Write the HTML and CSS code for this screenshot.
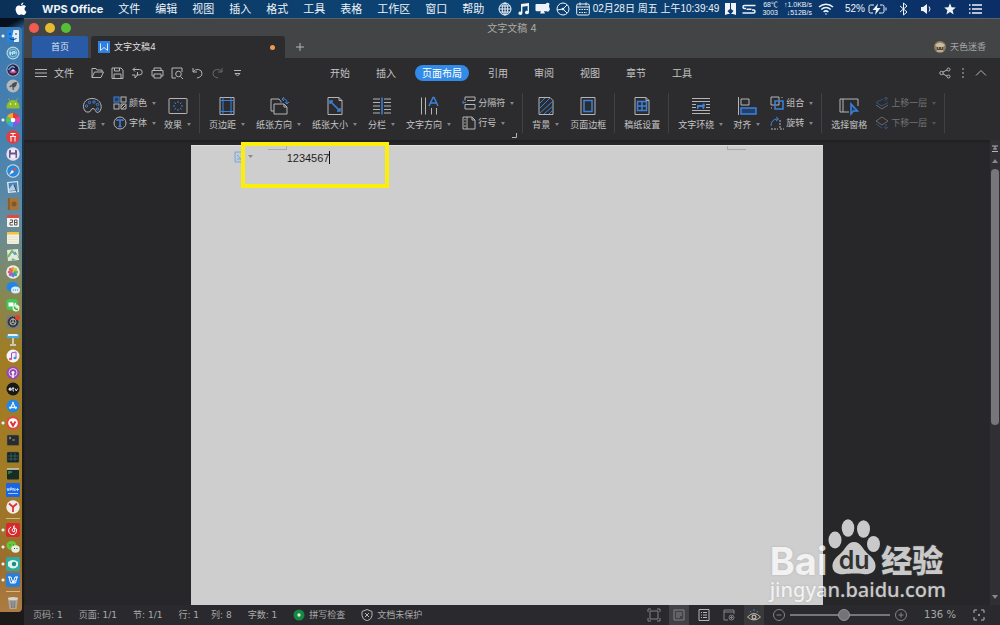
FILE: index.html
```html
<!DOCTYPE html>
<html lang="zh-CN">
<head>
<meta charset="utf-8">
<title>文字文稿4</title>
<link rel="stylesheet" href="styles.css">
</head>
<body>
<header class="menubar">
  <nav class="menus">
    <svg class="apple" viewBox="0 0 12 14" width="12" height="14"><path d="M8.3.5c.1 1.500-1 2.700-2.300 2.800C5.900 1.900 7 .7 8.300.5zM6.200 4c.6 0 1.300-.7 2.400-.7 1 0 1.900.5 2.400 1.300-2.100 1.200-1.800 4.200.5 5.100-.5 1.400-1.600 3.300-2.800 3.300-.9 0-1.200-.5-2.300-.5s-1.500.5-2.300.5C2.700 13 .6 10.200.6 7.300c0-2.500 1.600-3.900 3.200-3.900 1 0 1.800.6 2.400.6z"/></svg>
    <button class="app-name">WPS Office</button>
    <button>文件</button><button>编辑</button><button>视图</button><button>插入</button><button>格式</button><button>工具</button><button>表格</button><button>工作区</button><button>窗口</button><button>帮助</button>
  </nav>
  <div class="tray">
    <div class="tray-near">
      <svg class="line" viewBox="0 0 14 14" width="14" height="14"><circle cx="7" cy="7" r="6"/><ellipse cx="7" cy="7" rx="2.800" ry="6"/><path d="M1 7h12M7 1v12M2 4h10M2 10h10"/></svg>
      <svg class="solid" viewBox="0 0 11 14" width="11" height="14"><path d="M3 2l8-1v9.500a2 1.700 0 1 1-1.400-1.600V4L4.400 4.800v6.500A2 1.700 0 1 1 3 9.700z"/></svg>
      <svg class="solid" viewBox="0 0 15 14" width="15" height="14"><path d="M1.500 2h9a3 3 0 0 1 4-.5l-.5 3 1 3-2 2.500-1-.8H9l1 2.300H5l1-2.300H1.500A1 1 0 0 1 .5 8V3a1 1 0 0 1 1-1z"/></svg>
      <svg class="line" viewBox="0 0 14 14" width="14" height="14"><circle cx="7" cy="7" r="6"/><path d="M1 8l6-1 4-4M7 7l4 4"/><circle cx="7" cy="7" r="1.300" class="dot"/></svg>
      <div class="clock">
        <svg class="line" viewBox="0 0 14 14" width="14" height="14"><rect x=".7" y="2" width="12.600" height="11" rx="1.500"/><path d="M1 5h12M4 .5v3M10 .5v3"/><path d="M3 7.500h9M3 10.500h8" stroke-dasharray="1.500 1"/></svg>
        <time>02月28日 周五 上午10:39:49</time>
      </div>
      <svg class="solid" viewBox="0 0 11 14" width="11" height="14"><path d="M0 1h5v6l-2.500 2L5 12H3L0 13zM6 1h5v12l-3-1H6l2.500-3L6 7z"/></svg>
      <svg class="line thick" viewBox="0 0 14 14" width="14" height="14"><path d="M13.500 3.500H2.500Q1 3.500 1 5t1.500 1.500H4M.5 11h11q1.500 0 1.500-1.500T11.500 8H10M4.500 7.300h5"/></svg>
      <div class="readout"><span>68℃</span><span>3003</span></div>
      <div class="readout"><span>↑1.0KB/s</span><span>↓512B/s</span></div>
      <svg class="line thick" viewBox="0 0 16 14" width="16" height="14"><path d="M1 5a10 10 0 0 1 14 0M3.300 7.500a6.700 6.700 0 0 1 9.400 0M5.600 10a3.500 3.500 0 0 1 4.800 0"/><circle cx="8" cy="12" r=".8" class="dot"/></svg>
    </div>
    <div class="tray-far">
      <div class="clock"><span>52%</span>
      <svg class="line" viewBox="0 0 19 14" width="19" height="14"><path d="M6 3H2.500Q1 3 1 4.500v5Q1 11 2.500 11H5M12 3h2.500Q16 3 16 4.500v5q0 1.500-1.500 1.500H11M18 5.500v3"/><path class="dot" d="M10 1.500L4.500 8H8l-1 5 5.500-7H9z"/></svg></div>
      <svg class="line" viewBox="0 0 9 14" width="9" height="14"><path d="M1 4l7 6-3.500 3V1L8 4l-7 6"/></svg>
      <svg class="line" viewBox="0 0 12 14" width="12" height="14"><path class="dot" d="M1 5h2l4-3v10L3 9H1z"/><path d="M9 4.500q2 2.500 0 5"/></svg>
      <svg class="solid" viewBox="0 0 12 12" width="12" height="12"><path d="M6 .2l1.600 4 4.200.3-3.200 2.700 1 4.200L6 9.100l-3.600 2.300 1-4.200L.2 4.500l4.200-.3z"/></svg>
      <svg class="line thick" viewBox="0 0 15 14" width="15" height="14"><path d="M4 3h10M4 7h10M4 11h10M1 3h1.500M1 7h1.500M1 11h1.500"/></svg>
    </div>
  </div>
</header>

<div class="desktop">
  <aside class="dock" aria-label="程序坞">
    <svg class="running" viewBox="0 0 14 14"><rect x="1" y="1" width="12" height="12" rx="1" fill="#e3edf5"/><path d="M1 1h6.500L6 8h2v5H1z" fill="#2385e8"/><path d="M4 4v2M10 4v2M3.500 9.500q3.500 2.500 7 0" fill="none" stroke="#17406e"/></svg>
    <svg viewBox="0 0 14 14"><circle cx="7" cy="7" r="6.500" fill="#b7d5e5"/><circle cx="7" cy="7" r="5.300" fill="#438eb5"/><circle cx="7" cy="7" r="3.800" fill="none" stroke="#a9d0e2" stroke-width=".7"/><path d="M4.500 9V5.500M6.500 9V5.500h2.500v1.700H6.500M3 7h8" fill="none" stroke="#d7edf5" stroke-width=".8"/></svg>
    <svg viewBox="0 0 14 14"><circle cx="7" cy="7" r="6.500" fill="#b9c3cb"/><circle cx="7" cy="7" r="5.700" fill="#252343"/><path d="M2.500 7q4-6 6-2" fill="none" stroke="#58a7e9" stroke-width="1.500"/><path d="M3 9q4 3 8 0L7 6z" fill="#d1478d"/><path d="M5 8q2 1 4 0L7 6z" fill="#e8e1f4"/></svg>
    <svg viewBox="0 0 14 14"><circle cx="7" cy="7" r="6.500" fill="#b2b8bc"/><path d="M11 3Q6 3 5 7l2 2q4-1 4-6M5 6L3 8l2 .3M8 9l-.5 2.500L6 9.500M4.500 8.500L3 11" fill="#495057"/></svg>
    <svg viewBox="0 0 14 14"><path d="M1 10.500a6 6 0 0 1 12 0V12H1zM4 5L2.500 2.500M10 5l1.500-2.500" fill="#91bd27" stroke="#91bd27"/><circle cx="4.500" cy="8" r=".8" fill="#fff"/><circle cx="9.500" cy="8" r=".8" fill="#fff"/></svg>
    <svg class="running" viewBox="0 0 14 14"><path fill="#e83a35" d="M7 7L7 0a7 7 0 0 1 6 3.500z"/><path fill="#e541a6" d="M7 7l6-3.500a7 7 0 0 1 0 7z"/><path fill="#7260e5" d="M7 7l6 3.500A7 7 0 0 1 7 14z"/><path fill="#38a8e5" d="M7 7v7a7 7 0 0 1-6-3.500z"/><path fill="#51c454" d="M7 7l-6 3.500a7 7 0 0 1 0-7z"/><path fill="#f0a92c" d="M7 7L1 3.500A7 7 0 0 1 7 0z"/><circle cx="7" cy="7" r="2.300" fill="#fff"/></svg>
    <svg viewBox="0 0 14 14"><circle cx="7" cy="7" r="6.700" fill="#e43d40"/><path d="M4.500 3.500h5M7 3.500v3M4 6.500h6M5 7v4.500M9 7v4.500" fill="none" stroke="#fff"/></svg>
    <svg viewBox="0 0 14 14"><circle cx="7" cy="7" r="6.700" fill="#e4e0ef"/><rect x="3" y="3" width="8" height="8" rx="1" fill="#6d5593"/><path d="M5 3h4v2.500H5zM4.500 7.500h5V11h-5z" fill="#f4effa"/></svg>
    <svg viewBox="0 0 14 14"><circle cx="7" cy="7" r="6.700" fill="#d4e1e9"/><circle cx="7" cy="7" r="5.800" fill="#2889dc"/><path d="M11 3L8 8 6 6z" fill="#ee5140"/><path d="M3 11l3-5 2 2z" fill="#fff"/></svg>
    <svg viewBox="0 0 14 14"><path d="M1 2l11-1 1 11-11 1z" fill="#dfe8ef"/><path d="M2.500 3l8.500-.7.700 8.500-8.400.8z" fill="#3f83c0"/><path d="M3 9l4-5 4 6-8 1z" fill="#b9cce0"/><path d="M8 5l3 7" stroke="#34465a"/></svg>
    <svg viewBox="0 0 14 14"><rect x="1.500" y="1" width="11" height="12" rx="1.500" fill="#a57437"/><path d="M3 1v12" stroke="#6f4b22"/><circle cx="8" cy="7" r="2.500" fill="#825725"/></svg>
    <svg viewBox="0 0 14 14"><rect x="1" y="1" width="12" height="12" rx="1" fill="#f3f1ed"/><path d="M1 1h12v3H1z" fill="#e14a42"/><path d="M4 6h2.500v2.500H4V11h3M8.500 6H11v5H8.500zM8.500 8.500H11" fill="none" stroke="#555"/></svg>
    <svg viewBox="0 0 14 14"><rect x="1" y="1" width="12" height="12" rx="1" fill="#f4f0df"/><path d="M1 1h12v2.500H1z" fill="#f5c33b"/><path d="M2 6h10M2 8.500h10M2 11h10" stroke="#d9d4c2" stroke-width=".5"/></svg>
    <svg viewBox="0 0 14 14"><path d="M1 2l11-1 1 11-11 1z" fill="#e5e9da"/><path d="M2 9l4-6 6 6-6 3" fill="none" stroke="#74b46b" stroke-width="2"/><circle cx="9.500" cy="9" r="2.500" fill="#dce7ef"/><path d="M9 3l2 3-3 1" fill="#4c9ddd"/></svg>
    <svg viewBox="0 0 14 14"><circle cx="7" cy="7" r="6.800" fill="#eee"/><g stroke-width="3" stroke-linecap="round"><path d="M7 5V3.200" stroke="#f2a334"/><path d="M8.500 5.500l1.200-1.200" stroke="#cfcb3e"/><path d="M9 7h1.800" stroke="#6eb950"/><path d="M8.500 8.500l1.200 1.200" stroke="#3aa39b"/><path d="M7 9v1.800" stroke="#5d83d0"/><path d="M5.500 8.500L4.300 9.700" stroke="#9c65b3"/><path d="M5 7H3.200" stroke="#d9578a"/><path d="M5.500 5.500L4.300 4.300" stroke="#e8684d"/></g></svg>
    <svg viewBox="0 0 14 14"><ellipse cx="6.500" cy="6" rx="6" ry="5" fill="#2385e9"/><ellipse cx="9.500" cy="9" rx="4.500" ry="3.500" fill="#d8edfa"/><path d="M7 9h5" stroke="#3784bf" stroke-dasharray="1"/></svg>
    <svg viewBox="0 0 14 14"><rect x=".5" y="1" width="11" height="11" rx="2.500" fill="#42c758"/><path d="M2.500 4.500h5v4h-5zM8 6l2-1.500v4z" fill="#fff"/><circle cx="10" cy="10" r="3.500" fill="#def5df"/><path d="M8.500 8.500q0 3 3.500 3" fill="none" stroke="#3aad4b" stroke-width="1.500"/></svg>
    <svg viewBox="0 0 14 14"><rect x=".5" y=".5" width="13" height="13" rx="2" fill="#777b7e"/><circle cx="7" cy="7" r="5" fill="#34383b" stroke="#191d20" stroke-dasharray="1"/><circle cx="7" cy="7" r="3" fill="none" stroke="#a2a6a8"/><path d="M7 7V3M7 7l-3 2m3-2l3 2" stroke="#bbb"/><circle cx="11.500" cy="2.500" r="2.500" fill="#e04336"/></svg>
    <svg viewBox="0 0 14 14"><path d="M1 2h12v4H1z" fill="#40aeea"/><path d="M2 2h9l1 2H2z" fill="#e2f2fa"/><path d="M7 6v6M4 13h6" stroke="#dedede" stroke-width="1.500"/></svg>
    <svg viewBox="0 0 14 14"><circle cx="7" cy="7" r="6.500" fill="#f4f3f5"/><path d="M5.500 10V4l4.500-1v6" fill="none" stroke="#9b52db"/><ellipse cx="4.500" cy="10" rx="1.500" ry="1.200" fill="#e34c80"/><ellipse cx="9" cy="9" rx="1.500" ry="1.200" fill="#3a91df"/></svg>
    <svg viewBox="0 0 14 14"><circle cx="7" cy="7" r="6.500" fill="#9649b5"/><circle cx="7" cy="6.500" r="4" fill="none" stroke="#ead2ee"/><circle cx="7" cy="6.500" r="1.500" fill="#fff"/><path d="M7 8v4" stroke="#fff" stroke-width="1.500"/></svg>
    <svg viewBox="0 0 14 14"><circle cx="7" cy="7" r="6.500" fill="#171919"/><circle cx="4.200" cy="7.200" r="1.600" fill="#ddd"/><path d="M7 5v4h1M6.200 6.500H8M9 6.500L10.300 9l1.300-2.500" fill="none" stroke="#ddd"/></svg>
    <svg viewBox="0 0 14 14"><circle cx="7" cy="7" r="6.500" fill="#2285e9"/><path d="M7.500 3L4 10M6.500 3L10 10M3 8.500h8" stroke="#e3f2fb" stroke-width="1.300"/></svg>
    <svg class="running" viewBox="0 0 14 14"><circle cx="7" cy="7" r="6.700" fill="#ea4142"/><circle cx="7" cy="7" r="4.800" fill="#fff"/><path d="M4.500 5.500L7 9.500l2.500-4" fill="none" stroke="#d83538" stroke-width="2"/></svg>
    <svg viewBox="0 0 14 14"><rect x="1" y="2" width="12" height="10.500" rx="1" fill="#292b2d" stroke="#77715b" stroke-width=".5"/><path d="M3 4l2 1-2 1M6 7h3" fill="none" stroke="#bbb" stroke-width=".7"/></svg>
    <svg viewBox="0 0 14 14"><rect x="1" y="2" width="12" height="10.500" rx="1" fill="#182423" stroke="#4d6357" stroke-width=".5"/><path d="M2 6h10M2 9h10M5 3v8M9 3v8" stroke="#366861" stroke-width=".8"/></svg>
    <svg viewBox="0 0 14 14"><rect x="1" y="1.500" width="12" height="11" rx="1" fill="#182c23"/><path d="M1 2h12" stroke="#d7ddd8" stroke-width="1.500"/><path d="M3 4v3M5 4v2" stroke="#55b86d"/></svg>
    <svg viewBox="0 0 14 14"><rect y="0" width="14" height="14" rx="1" fill="#1766e5"/><path d="M1 5l1 3 1-3M4 8V5h2v1.500H4M7 8V5l2 3V5M10 6.500h3M11.500 5v3M2 10.500h10" fill="none" stroke="#d1e3ff" stroke-width=".8"/></svg>
    <svg viewBox="0 0 14 14"><circle cx="7" cy="7" r="6.700" fill="#efece9"/><path d="M3 3.500L7 7l4-3.500M7 7v5" fill="none" stroke="#dc3834" stroke-width="1.800"/></svg>
    <hr>
    <svg class="running" viewBox="0 0 14 14"><rect width="14" height="14" rx="2" fill="#d8282d"/><path d="M5 4a4 4 0 1 0 5 1.500Q8 4 6.500 6T8 9q1.500-.5.500-3L7.500 4q0-1.500 1.500-1" fill="none" stroke="#fff"/></svg>
    <svg class="running" viewBox="0 0 14 14"><ellipse cx="5.500" cy="5.500" rx="5" ry="4.500" fill="#65c83e"/><ellipse cx="9.500" cy="9" rx="4.200" ry="3.700" fill="#e8eee4"/><path d="M3.500 5h1M7 5h1M8 8.500h1M10.500 8.500h1" stroke="#435b3d"/></svg>
    <svg class="running" viewBox="0 0 14 14"><rect width="14" height="14" rx="2" fill="#30a9a0"/><path d="M2 5q5-4 10 0v4q-5 5-10 0z" fill="#def5ed"/><circle cx="8" cy="7" r="2.200" fill="#228983"/></svg>
    <svg class="running" viewBox="0 0 14 14"><rect width="14" height="14" rx="2" fill="#277edc"/><path d="M2 4h3l2 6 2-6h3M3 4l1.500 6H7L9.500 7M11 4l-1.500 6H7" fill="none" stroke="#fff"/></svg>
    <hr>
    <svg viewBox="0 0 14 14"><path d="M2 2h10l-1.500 11h-7z" fill="#aaa9a3"/><ellipse cx="7" cy="2.500" rx="5" ry="1.500" fill="#d7d6d1"/><path d="M5 5l.5 7M7 5v7M9 5l-.5 7" stroke="#777"/></svg>
  </aside>

  <main class="window">
    <div class="titlebar">
      <div class="title-row">
        <div class="lights"><button class="close" aria-label="关闭"></button><button class="minimize" aria-label="最小化"></button><button class="maximize" aria-label="全屏"></button></div>
        <h1>文字文稿 4</h1>
      </div>
      <div class="tabs">
        <button class="home">首页</button>
        <button class="doc-tab"><svg viewBox="0 0 12 12" width="12" height="12"><rect width="12" height="12" fill="#2f80e4"/><path d="M2.500 2.500v7L6 6.500l3.500 3v-7" fill="none" stroke="#d9eafa"/></svg><span>文字文稿4</span><i class="unsaved"></i></button>
        <button class="add" aria-label="新建标签"><svg class="ic" viewBox="0 0 10 10" width="10" height="10"><path d="M5 1v8M1 5h8"/></svg></button>
        <button class="user"><svg viewBox="0 0 12 12" width="12" height="12"><circle cx="6" cy="6" r="6" fill="#8d7c5e"/><path d="M1 4q5-5 10 0L9 6H3z" fill="#c9bd9f"/><path d="M3 6h6v3H3z" fill="#55473a"/><path d="M4 7h1M7 7h1M3 10h6" stroke="#e4dcc6"/></svg><span>天色迷香</span></button>
      </div>
    </div>

    <div class="commandbar">
      <div class="quick">
        <button class="file-menu"><svg class="ic" viewBox="0 0 12 12" width="12" height="12"><path d="M0 2.500h12M0 6h12M0 9.500h12"/></svg>文件</button>
        <button aria-label="打开"><svg class="ic" viewBox="0 0 13 12"><path d="M1 10.500v-9h4l1 1.500h5v2M1 10.500L3.500 5h9L10 10.500z"/></svg></button>
        <button aria-label="保存"><svg class="ic" viewBox="0 0 13 12"><path d="M1 1h9l2 2v8.500H1zM3.500 1v3h5V1M3 11V7h7v4"/></svg></button>
        <button aria-label="输出"><svg class="ic" viewBox="0 0 13 12"><path d="M2 2.500h6.500a2.700 2.700 0 0 1 0 5.400H5.500M4 .5l-2 2 2 2M6.500 5v3L4 11M1 8h3v3"/></svg></button>
        <button aria-label="打印"><svg class="ic" viewBox="0 0 13 12"><path d="M3 3.500V1h7v2.500M3 9H1V3.500h11V9h-2M3 7h7v4H3z"/></svg></button>
        <button aria-label="打印预览"><svg class="ic" viewBox="0 0 13 12"><path d="M5 11H1V1h10v4M9.500 9.500L12 12"/><circle cx="7.500" cy="7" r="2.800"/></svg></button>
        <button aria-label="撤销"><svg class="ic" viewBox="0 0 13 12"><path d="M2 1v4h4M2 5q2-3 5.500-2.500T11 6.500 6 11"/></svg></button>
        <button aria-label="恢复" class="dim"><svg class="ic" viewBox="0 0 13 12"><path d="M11 1v4H7M11 5Q9 2 5.500 2.500T2 6.500 7 11"/></svg></button>
        <button aria-label="更多"><svg class="ic" viewBox="0 0 13 12"><path d="M3 3.500h7M4 6.500L6.500 9 9 6.500z"/></svg></button>
      </div>
      <nav class="ribbon-tabs"><button>开始</button><button>插入</button><button class="active">页面布局</button><button>引用</button><button>审阅</button><button>视图</button><button>章节</button><button>工具</button></nav>
      <div class="window-tools">
        <button aria-label="分享"><svg class="ic" viewBox="0 0 12 12" width="12" height="12"><circle cx="2.500" cy="6" r="1.700"/><circle cx="9.500" cy="2.500" r="1.500"/><circle cx="9.500" cy="9.500" r="1.500"/><path d="M4 5l4-2M4 7l4 2"/></svg></button>
        <button aria-label="更多选项"><svg class="ic" viewBox="0 0 4 12" width="4" height="12"><path d="M2 1v2M2 5v2M2 9v2"/></svg></button>
        <button aria-label="收起功能区"><svg class="ic" viewBox="0 0 12 12" width="12" height="12"><path d="M1 8.500l5-5 5 5"/></svg></button>
      </div>
    </div>

    <div class="ribbon">
      <div class="group compact">
        <button class="big"><svg class="ic" viewBox="0 0 20 20"><path d="M3 15C-1 9 3 2.500 10 2.500S20 8 19 12.500q-.7 4-3.500 4c-2.500 0-1.500-4-4.500-4-2.500 0-1.500 3-4 3.500Q4.500 16.500 3 15z"/><g class="blue"><circle cx="4.500" cy="10" r="1.200"/><circle cx="7.500" cy="6.500" r="1.200"/><circle cx="12" cy="6" r="1.200"/><circle cx="15.500" cy="8.500" r="1.200"/><circle cx="15.500" cy="13" r="1.200"/></g></svg><span class="drop">主题</span></button>
        <div class="stack">
          <button><svg class="ic" viewBox="0 0 14 14"><rect class="blue tint" x="1" y="1" width="5" height="5"/><rect x="8" y="1" width="5" height="5"/><rect x="1" y="8" width="5" height="5"/><path d="M8 8h5v5H8zM8 11l3-3M9 13l4-4"/></svg><span class="drop">颜色</span></button>
          <button><svg class="ic" viewBox="0 0 14 14"><circle cx="7" cy="7" r="6"/><path class="blue bold" d="M4 5V4h6v1M7 4v6.500M5.500 10.500h3"/></svg><span class="drop">字体</span></button>
        </div>
        <button class="big"><svg class="ic" viewBox="0 0 20 20"><rect x="1" y="2.500" width="18" height="15" rx=".5"/><path class="blue" d="M10 5v2M10 13v2M5 10h2M13 10h2M6.500 6.500L8 8M12 12l1.500 1.500M6.500 13.500L8 12M12 8l1.500-1.500"/></svg><span class="drop">效果</span></button>
      </div>
      <div class="group roomy">
        <button class="big"><svg class="ic" viewBox="0 0 20 20"><path d="M3 1.500h14v17H3z"/><path class="blue" d="M6 1.500v17M14 1.500v17M3 4.500h14M3 15.500h14"/></svg><span class="drop">页边距</span></button>
        <button class="big"><svg class="ic" viewBox="0 0 20 20"><path d="M5 15H2V3h8l2 2.500M12 5.500v1M5 8h10l3 3v7H5zM15 8v3h3"/><path class="blue" d="M15 1l-2 2 2 2M13 3q5-1 5 4M16 6l2 2 2-2"/></svg><span class="drop">纸张方向</span></button>
        <button class="big"><svg class="ic" viewBox="0 0 20 20"><path d="M3 1.500h11l3 3v14H3zM14 1.500v3h3"/><path class="blue bold" d="M5 5l10 10M5 8V5h3M15 12v3h-3"/></svg><span class="drop">纸张大小</span></button>
        <button class="big"><svg class="ic" viewBox="0 0 20 20"><path d="M1 3h7M1 6.500h7M1 10h7M1 13.500h7M1 17h7M12 3h7M12 6.500h7M12 10h7M12 13.500h7M12 17h7"/><path class="blue bold" d="M10 1.500v17"/></svg><span class="drop">分栏</span></button>
        <button class="big"><svg class="ic" viewBox="0 0 20 20"><path d="M2.500 1.500v17M6.500 1.500v17M12.500 12v6.500M17.500 12v6.500"/><path class="blue bold" d="M10 10l4-8.500h1L19 10M11.500 7h6"/></svg><span class="drop">文字方向</span></button>
        <div class="stack">
          <button><svg class="ic" viewBox="0 0 14 14"><path d="M3 4.500V1h10v3.500H5M3 13V8.500h10V13z"/><path class="blue" d="M1 4.500V8M1 6.500h3"/></svg><span class="drop">分隔符</span></button>
          <button><svg class="ic" viewBox="0 0 14 14"><path d="M1 1h9l3 3v9H1zM5 1v12M3 3v1.500M3 6v1.500M3 9v2M10 1v3h3"/></svg><span class="drop">行号</span></button>
        </div>
        <svg class="launcher ic" viewBox="0 0 5 5" width="5" height="5"><path d="M4.500 0v4.500H0"/></svg>
      </div>
      <div class="group roomy">
        <button class="big"><svg class="ic" viewBox="0 0 20 20"><path d="M3 1.500h11l3 3v14H3z"/><path class="blue" d="M3 8l6-6M3 13L14 2M3 18L17 5M8 18l9-8M13 18l4-4"/></svg><span class="drop">背景</span></button>
        <button class="big"><svg class="ic" viewBox="0 0 20 20"><path d="M3 1.500h14v17H3z"/><path class="blue bold" d="M6 4.500h8v11H6z"/></svg><span>页面边框</span></button>
      </div>
      <div class="group">
        <button class="big"><svg class="ic" viewBox="0 0 20 20"><path d="M3 1.500h11l3 3v14H3zM14 1.500v3h3"/><path class="blue bold" d="M5.500 5.500h9v9h-9zM10 5.500v9M5.500 10h9"/></svg><span>稿纸设置</span></button>
      </div>
      <div class="group">
        <button class="big"><svg class="ic" viewBox="0 0 20 20"><path d="M1 2.500h18M1 5.500h18M1 8.500h4M1 11.500h4M15 8.500h4M15 11.500h4M1 14.500h18M1 17.500h18"/><path class="blue-fill" d="M6 13V9h5l2-2 1 2-1 4h-1l-1-2H8l-1 2z"/></svg><span class="drop">文字环绕</span></button>
        <button class="big"><svg class="ic" viewBox="0 0 20 20"><path d="M1.500 1v18M4 3h8v6H4z"/><path class="blue bold tint" d="M4 12h15v6H4z"/></svg><span class="drop">对齐</span></button>
        <div class="stack">
          <button><svg class="ic" viewBox="0 0 14 14"><path d="M1 1h8v8H1zM1 12h1M12 1v1"/><path class="blue bold" d="M5 5h8v8H5z"/></svg><span class="drop">组合</span></button>
          <button><svg class="ic" viewBox="0 0 14 14"><path d="M1 13h7M10 4v9h4" stroke-dasharray="2 1"/><path class="blue" d="M1 10q0-7 7-7M6 1l2.500 2L6 5"/></svg><span class="drop">旋转</span></button>
        </div>
      </div>
      <div class="group compact">
        <button class="big"><svg class="ic" viewBox="0 0 20 20"><path d="M10 16H1V3h18v7M4 3v13"/><path class="blue bold tint" d="M12 8v10l2.500-3h4z"/></svg><span>选择窗格</span></button>
        <div class="stack faded">
          <button disabled><svg class="ic" viewBox="0 0 14 14"><path d="M1 9l6 4 6-4"/><path class="blue" d="M8 3L1 6.500 7 10l6-3.500M11 5V1M9 3l2-2 2 2"/></svg><span class="drop">上移一层</span></button>
          <button disabled><svg class="ic" viewBox="0 0 14 14"><path d="M7 1L1 5l6 4 6-4z"/><path class="blue" d="M1 8l6 4M11 8v5M9 11l2 2 2-2"/></svg><span class="drop">下移一层</span></button>
        </div>
      </div>
    </div>

    <div class="workspace">
      <div class="canvas">
        <article class="page">
          <svg class="para-mark" viewBox="0 0 20 12" width="20" height="12"><path d="M1 1h7v10H1zM3 4l4 4M3 8h4" fill="#bdcbdb" stroke="#7fa7d2"/><path d="M14 4h5l-2.500 3z" fill="#888"/></svg>
          <i class="corner corner-left"></i><i class="corner corner-right"></i>
          <p contenteditable="true">1234567<i class="cursor"></i></p>
          <div class="highlight"></div>
        </article>
      </div>
      <div class="scrollbar">
        <svg class="ic" viewBox="0 0 8 8" width="8" height="8"><path d="M1 1h6M1 6.500h6M4 1v3M2 4h4"/></svg>
        <i class="arrow up"></i><div class="track"><div class="thumb"></div></div><i class="arrow down"></i>
      </div>
      <div class="watermark" aria-label="百度经验">
        <div class="brand"><span class="bai">Bai</span><span class="paw"><svg viewBox="0 0 52 56" width="52" height="56"><ellipse cx="7" cy="21" rx="6.500" ry="8.500"/><ellipse cx="20" cy="9" rx="6.300" ry="8.700"/><ellipse cx="35.500" cy="10" rx="6.500" ry="8.700"/><ellipse cx="45.500" cy="25" rx="6.500" ry="8"/><path d="M26 23c7 0 9 8 14 12 5 4 8 8 7.500 13-.7 6-7 8-12.500 7-4-.8-14-.8-18 0-6 1-12-1-12.500-7-.5-5 2.500-9 7.500-13 5-4 7-12 14-12z"/></svg><b>du</b></span><span class="exp">经验</span></div>
        <div class="site">jingyan.baidu.com</div>
      </div>
    </div>

    <footer class="status">
      <div class="facts"><span>页码: 1</span><span>页面: 1/1</span><span>节: 1/1</span><span class="pair"><span>行: 1</span><span>列: 8</span></span><span>字数: 1</span>
        <button><svg viewBox="0 0 12 12" width="12" height="12"><circle cx="6" cy="6" r="5.500" fill="#178744"/><circle cx="6" cy="6" r="1.700" fill="#d6eedc"/></svg>拼写检查</button>
        <button><svg class="ic" viewBox="0 0 12 12" width="12" height="12"><path d="M6 .5l5 2v4q0 3.500-5 5.500-5-2-5-5.500v-4zM4 4l4 4M8 4L4 8"/></svg>文档未保护</button></div>
      <div class="views">
        <button aria-label="全屏显示"><svg class="ic mid" viewBox="0 0 14 14"><path d="M3 3h8v8H3zM1 4V1h3M10 1h3v3M13 10v3h-3M4 13H1v-3"/></svg></button>
        <button class="on" aria-label="页面视图"><svg class="ic mid" viewBox="0 0 14 14"><path d="M2 2h10v10H2zM4 5h6M4 7h6M4 9h4"/></svg></button>
        <button aria-label="大纲视图"><svg class="ic" viewBox="0 0 14 14"><path d="M2 1.500h10v11H2zM4 4.500h1M6 4.500h4M4 7h1M6 7h4M4 9.500h1M6 9.500h4"/></svg></button>
        <button aria-label="网页视图"><svg class="ic mid" viewBox="0 0 14 14"><path d="M6 12H2V2h10v4M2 4h10"/><circle cx="9.500" cy="9.500" r="2.500"/><path d="M8 9.500h3M9.500 8v3"/></svg></button>
        <button class="eye" aria-label="护眼模式"><svg class="ic" viewBox="0 0 14 14"><path d="M.5 9Q7 2 13.500 9 7 15 .5 9z" stroke="#c6b69a"/><circle cx="7" cy="9" r="2" stroke="#ddd"/><path class="blue" d="M3 3l1 1.500M7 1v2M11 3l-1 1.500"/></svg></button>
        <button aria-label="缩小"><svg class="ic mid" viewBox="0 0 14 14"><circle cx="7" cy="7" r="5.500"/><path d="M4.500 7h5"/></svg></button>
        <input type="range" min="0" max="100" value="55" aria-label="缩放">
        <button aria-label="放大"><svg class="ic mid" viewBox="0 0 14 14"><circle cx="7" cy="7" r="5.500"/><path d="M4.500 7h5M7 4.500v5"/></svg></button>
        <output>136 %</output>
        <button aria-label="适合窗口"><svg class="ic" viewBox="0 0 14 14"><path d="M2 5V2h3M9 2h3v3M12 9v3H9M5 12H2V9"/><circle cx="7" cy="7" r=".7"/></svg></button>
      </div>
    </footer>
  </main>
</div>
</body>
</html>
```

FILE: styles.css
```css
* { box-sizing: border-box; }

body {
  margin: 0;
  min-height: 100vh;
  display: flex;
  flex-direction: column;
  overflow: hidden;
  font-family: Inter, "Noto Sans CJK SC", sans-serif;
  font-size: 9px;
  line-height: 12px;
  color: #c4c4c4;
  background: #1c1a18;
}

button {
  margin: 0;
  padding: 0;
  border: 0;
  background: none;
  color: inherit;
  font: inherit;
  white-space: nowrap;
}

svg { display: block; flex: none; }
.ic { fill: none; stroke: #b5b5b5; stroke-width: 1; }
.ic .blue { stroke: #3b82dc; }
.ic .bold { stroke-width: 1.5; }
.ic .tint { fill: #23406a; }
.ic .blue-fill { fill: #3b82dc; stroke: none; }
.ic.mid { stroke: #838386; }

/* System menu bar */
.menubar {
  height: 18px;
  display: flex;
  justify-content: space-between;
  align-items: center;
  padding: 0 17px 0 15px;
  background: linear-gradient(90deg, #0b3158, #0c4272 35%, #0c4272 60%, #0b2e66);
  color: #eef3f8;
  font-size: 11px;
}
.menus { display: flex; align-items: center; gap: 15px; }
.apple { fill: #fff; }
.app-name { font-weight: 700; }
.tray, .tray-near, .tray-far, .clock { display: flex; align-items: center; }
.tray {
  gap: 11px;
  font-family: "Liberation Sans", "Noto Sans CJK SC", sans-serif;
  font-size: 10px;
  white-space: nowrap;
}
.tray-near { gap: 6px; }
.tray-far { gap: 12px; }
.clock { gap: 3px; }
.line { fill: none; stroke: #eef3f8; stroke-width: 1; }
.line.thick { stroke-width: 1.5; }
.line .dot, .solid { fill: #eef3f8; stroke: none; }
.readout {
  display: flex;
  flex-direction: column;
  text-align: right;
  font-size: 7px;
  line-height: 8px;
}

/* Dock */
.desktop {
  flex: 1;
  display: grid;
  grid-template-columns: 24px minmax(0, 1fr);
  background: linear-gradient(150deg, #07101d 0, #07101d 1%, #266098 2%, #183650 12%, #1c1a18 40%);
}
.dock {
  margin: 9px 2px 13px 0;
  padding: 2px 2px 2px 6px;
  display: flex;
  flex-direction: column;
  justify-content: space-between;
  border-radius: 0 4px 4px 0;
  background: linear-gradient(#3c79b1, #4a83af 22%, #668c9c 34%, #81895c 44%, #a07c23 56%, #a27c25 76%, #9a6d2d 92%, #ae7c43);
}
.dock svg { width: 14px; height: 14px; overflow: visible; }
.dock hr {
  width: 14px;
  height: 1px;
  margin: 1px 0;
  border: 0;
  background: #d5b77f;
}
.dock .running {
  width: 20px;
  margin-left: -6px;
  padding-left: 6px;
  background: radial-gradient(circle at 3px 7px, #e8eef2 1px, transparent 2px);
}

/* Application window */
.window {
  display: flex;
  flex-direction: column;
  min-width: 0;
  background: #2c2c2e;
}
.titlebar { background: #434445; border-top: 1px solid #59616a; }
.title-row {
  height: 17px;
  display: grid;
  grid-template-columns: 1fr auto 1fr;
  align-items: center;
}
.title-row h1 { margin: 0; font-size: 10px; font-weight: 400; color: #aaa; }
.lights { display: flex; gap: 6px; padding-left: 5px; }
.lights button { width: 10px; height: 10px; border-radius: 50%; }
.lights .close { background: #f05b52; }
.lights .minimize { background: #e5bb32; }
.lights .maximize { background: #56bf38; }
.tabs { display: flex; gap: 3px; height: 22px; padding: 0 14px 0 8px; }
.home { width: 56px; background: #295aa5; border-radius: 2px 2px 0 0; color: #dce6f3; }
.doc-tab {
  width: 194px;
  display: flex;
  align-items: center;
  gap: 4px;
  padding: 0 10px 0 7px;
  border-radius: 3px 3px 0 0;
  background: #2c2c2e;
  color: #dedede;
}
.unsaved { width: 5px; height: 5px; margin-left: auto; border-radius: 50%; background: #ef9a50; }
.add { padding: 0 7px; }
.user { display: flex; align-items: center; gap: 4px; margin-left: auto; color: #a5a5a5; }

.commandbar {
  height: 29px;
  display: grid;
  grid-template-columns: 1fr auto 1fr;
  align-items: center;
  padding: 0 13px 0 11px;
  font-size: 10px;
}
.quick { display: flex; align-items: center; gap: 7px; }
.quick svg { height: 12px; }
.file-menu { display: flex; align-items: center; gap: 7px; margin-right: 10px; }
.dim { opacity: .45; }
.ribbon-tabs { display: flex; align-items: center; gap: 12px; }
.ribbon-tabs button { padding: 2px 7px; border-radius: 8px; }
.ribbon-tabs .active { background: #328be8; color: #fff; }
.window-tools { display: flex; justify-content: flex-end; align-items: center; gap: 10px; }

/* Ribbon */
.ribbon { display: flex; height: 53px; padding: 6px 0 7px 45px; }
.group {
  position: relative;
  display: flex;
  align-items: center;
  gap: 10px;
  padding: 0 8px 0 9px;
  border-right: 1px solid #414143;
}
.group.compact { gap: 8px; }
.group.roomy { gap: 11px; }
.big {
  display: flex;
  flex-direction: column;
  align-items: center;
  gap: 3px;
}
.big svg { width: 20px; height: 20px; }
.stack { display: flex; flex-direction: column; gap: 6px; }
.stack button { display: flex; align-items: center; gap: 2px; }
.stack svg { width: 14px; height: 14px; }
.drop { display: flex; align-items: center; gap: 5px; }
.drop::after {
  content: "";
  border: 2px solid transparent;
  border-top: 3px solid #848484;
  border-bottom: 0;
}
.faded { opacity: .45; }
.launcher { position: absolute; right: 5px; bottom: -5px; }

/* Document area */
.workspace {
  position: relative;
  flex: 1;
  display: flex;
  background: #272729;
  box-shadow: inset 0 2px 2px #202022;
}
.canvas { flex: 1; display: flex; justify-content: center; padding-top: 5px; }
.page {
  position: relative;
  width: 65.5%;
  padding: 5px 96px;
  background: #cecece;
  border-top: 1px solid #dedede;
  color: #1e1e1e;
  font: 11px/14px "Liberation Sans", sans-serif;
}
.page p { margin: 0; outline: 0; display: flex; }
.cursor { width: 1px; height: 13px; background: #111; }
.para-mark { position: absolute; left: 43px; top: 5px; }
.corner { position: absolute; top: 0; width: 19px; height: 4px; border-bottom: 1px solid #aaa; }
.corner-left { left: 77px; border-right: 1px solid #aaa; }
.corner-right { right: 77px; border-left: 1px solid #aaa; }
.highlight {
  position: absolute;
  left: 50px;
  top: -4px;
  width: 148px;
  height: 46px;
  border: 4px solid #fbed0c;
}
.scrollbar {
  width: 10px;
  display: flex;
  flex-direction: column;
  align-items: center;
  gap: 6px;
  padding: 5px 0 6px;
  background: #303034;
}
.arrow { border: 3px solid transparent; }
.up { border-bottom: 4px solid #888; border-top: 0; }
.down { border-top: 4px solid #888; border-bottom: 0; }
.track { flex: 1; width: 8px; }
.thumb { height: 61%; border-radius: 4px; background: #77777b; }

.watermark { position: absolute; right: 54px; bottom: 0; color: #fff; opacity: .75; text-shadow: 0 0 2px #8888; }
.brand { display: flex; align-items: flex-end; gap: 1px; height: 56px; }
.bai { font: 700 38px/28px Inter, sans-serif; }
.paw { display: grid; place-items: end center; }
.paw svg, .paw b { grid-area: 1 / 1; }
.paw svg { fill: #fff; }
.paw b { font: 600 25px/30px Inter, sans-serif; color: #353535; text-shadow: none; }
.exp { font: 900 31px/32px "Noto Sans CJK SC", sans-serif; }
.site { font: 500 20px/30px "Noto Sans", sans-serif; }

/* Status bar */
.status {
  height: 20px;
  display: flex;
  align-items: center;
  justify-content: space-between;
  padding: 0 11px 0 9px;
  background: #2a2a2e;
  color: #a9a9a9;
  font-family: "DejaVu Sans", "Noto Sans CJK SC", sans-serif;
  white-space: nowrap;
}
.facts { display: flex; align-items: center; gap: 16px; }
.facts button, .pair { display: flex; align-items: center; gap: 4px; }
.facts .pair { gap: 12px; }
.views { display: flex; align-items: center; gap: 5px; }
.views button { padding: 3px; }
.views svg { width: 14px; height: 14px; }
.views .on { background: #424246; }
.views .eye { background: #39393b; }
.views output { width: 48px; text-align: center; font-size: 10px; }
input[type="range"] {
  appearance: none;
  width: 100px;
  height: 12px;
  margin: 0 -4px;
  background: linear-gradient(#77777a, #77777a) center / 100% 2px no-repeat;
}
input[type="range"]::-webkit-slider-thumb {
  appearance: none;
  width: 12px;
  height: 12px;
  border: 1px solid #949498;
  border-radius: 50%;
  background: #747478;
}
```
